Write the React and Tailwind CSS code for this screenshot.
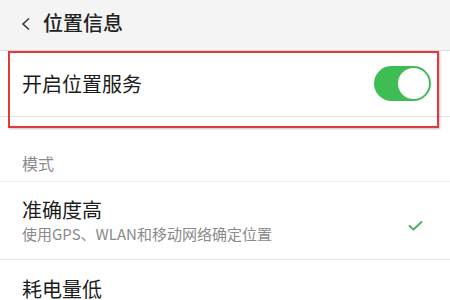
// App.jsx
const font = { fontFamily: '"Noto Sans CJK SC", "Noto Sans", sans-serif' };

function Toggle() {
  return (
    <div className="w-[57px] h-[35px] rounded-full bg-[#3fbd55] flex items-center justify-end pr-[2px]">
      <div className="w-[31px] h-[31px] rounded-full bg-white" />
    </div>
  );
}

function App() {
  return (
    <div
      className="relative w-[450px] h-[300px] overflow-hidden bg-white text-[#1c1c1c]"
      style={font}
    >
      {/* Header */}
      <div className="h-[51px] bg-[#f4f4f4] border-b border-[#dedede] flex items-center pl-[21px] pb-[4px] gap-[12px]">
        <svg width="10" height="14" viewBox="0 0 10 14" className="mt-[1px]">
          <polyline
            points="8,1.5 2,7 8,12.5"
            fill="none"
            stroke="#333"
            strokeWidth="1.5"
          />
        </svg>
        <span className="text-[20px] leading-none font-medium text-[#222]">位置信息</span>
      </div>

      {/* Location toggle row */}
      <div className="h-[66px] flex items-center justify-between pl-[22px] pr-[19px] border-b border-[#e4e4e4]">
        <span className="text-[20px] leading-none">开启位置服务</span>
        <Toggle />
      </div>

      {/* Mode section */}
      <div className="h-[65px] flex items-end pl-[22px] pb-[7px] border-b border-[#eeeeee]">
        <span className="text-[16px] leading-[22px] text-[#8a8a8a]">模式</span>
      </div>

      <div className="h-[78px] flex items-center justify-between pl-[22px] pr-[26px] border-b border-[#e4e4e4]">
        <div className="flex flex-col gap-[6px]">
          <span className="text-[20px] leading-none">准确度高</span>
          <span className="text-[15px] leading-none text-[#8a8a8a]">使用GPS、WLAN和移动网络确定位置</span>
        </div>
        <svg width="17" height="13" viewBox="0 0 17 13" className="mt-[10px]">
          <polyline
            points="2,6.5 6.5,10.5 15,2.5"
            fill="none"
            stroke="#4caf5e"
            strokeWidth="1.9"
          />
        </svg>
      </div>

      <div className="h-[60px] flex items-center pl-[22px] pb-[2px]">
        <span className="text-[20px] leading-none">耗电量低</span>
      </div>

      {/* Highlight overlay */}
      <div className="absolute left-[8px] top-[51px] w-[431px] h-[77px] border-2 border-[#e23a3a] shadow-[1px_1px_2px_rgba(0,0,0,0.25)]" />
    </div>
  );
}

export default App;
